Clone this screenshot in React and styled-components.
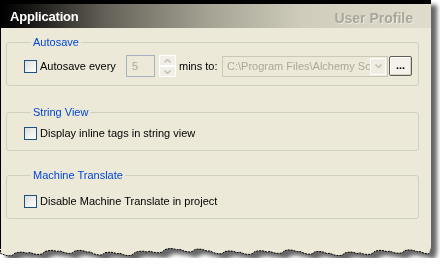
import styled, { createGlobalStyle } from 'styled-components';

const Global = createGlobalStyle`
  html, body { margin: 0; padding: 0; background: #fff; }
  body { font-family: "Liberation Sans", Arial, sans-serif; font-size: 11px; color: #000; }
`;

// Marco completo con sombra (ventana + borde rasgado)
const Frame = styled.div`
  width: 431px;
  filter: drop-shadow(6px 5px 2px rgba(0, 0, 0, 0.6));
`;

const Window = styled.div`
  box-sizing: border-box;
  height: 247px;
  background: #ece9d8;
  border-top: 4px solid #000;
  border-left: 1px solid #000;
`;

const Header = styled.div`
  height: 24px;
  display: flex;
  align-items: center;
  justify-content: space-between;
  padding: 0 18px 0 9px;
  background: linear-gradient(to right, #000 0%, #1c1b18 8%, #66645a 25%, #a4a293 48%, #cfccbb 70%, #e0ddcd 100%);
  font-weight: bold;
  font-size: 13px;
`;

const Title = styled.span`
  color: #fff;
  letter-spacing: -0.2px;
  padding-top: 1px;
`;

const Section = styled.span`
  color: #a9a79b;
  text-shadow: 1px 1px 0 rgba(255, 255, 255, 0.45);
  font-size: 14px;
  padding-top: 3px;
`;

const Body = styled.div`
  padding: 0 12px 0 5px;
`;

const Group = styled.fieldset`
  margin: ${(p) => p.$top}px 0 0 0;
  padding: 0 0 ${(p) => p.$bottom}px 17px;
  border: 1px solid #d0d0bf;
  border-radius: 3px;
  min-width: 0;
`;

const Legend = styled.legend`
  margin-left: 7px;
  padding: 0 2px;
  line-height: 13px;
  color: #0046d5;
`;

const Row = styled.div`
  display: flex;
  align-items: center;
  margin-top: ${(p) => p.$top}px;
  height: ${(p) => p.$h || 13}px;
`;

const Check = styled.span`
  box-sizing: border-box;
  width: 13px;
  height: 13px;
  flex: none;
  border: 1px solid #1c5180;
  background: linear-gradient(135deg, #dcdcd7 0%, #f2f2ef 60%, #fff 100%);
`;

const Label = styled.span`
  margin-left: 3px;
  line-height: 13px;
  white-space: nowrap;
  width: ${(p) => (p.$w ? `${p.$w}px` : 'auto')};
  flex: none;
`;

const SpinText = styled.span`
  box-sizing: border-box;
  width: 29px;
  height: 22px;
  margin-left: 9px;
  border: 1px solid #a6b2c2;
  padding-left: 5px;
  line-height: 20px;
  color: #aca899;
  flex: none;
`;

const SpinButtons = styled.span`
  display: flex;
  flex-direction: column;
  width: 17px;
  height: 22px;
  margin-left: 4px;
  flex: none;
`;

const SpinHalf = styled.span`
  box-sizing: border-box;
  flex: 1;
  display: flex;
  align-items: center;
  justify-content: center;
  border: 1px solid #fff;
  background: #f1efe6;
`;

const Combo = styled.span`
  box-sizing: border-box;
  display: flex;
  align-items: center;
  width: 166px;
  height: 21px;
  margin-left: 8px;
  border: 1px solid #cbc8b9;
  padding: 0 1px 0 4px;
  flex: none;
`;

const ComboText = styled.span`
  flex: 1;
  min-width: 0;
  overflow: hidden;
  white-space: nowrap;
  color: #aca899;
`;

const ComboArrow = styled.span`
  box-sizing: border-box;
  width: 16px;
  height: 17px;
  flex: none;
  display: flex;
  align-items: center;
  justify-content: center;
  border: 1px solid #fff;
  background: #eeece3;
`;

const BrowseButton = styled.button`
  box-sizing: border-box;
  width: 23px;
  height: 20px;
  margin-left: 1px;
  padding: 0 0 3px 0;
  flex: none;
  border: 1px solid #5e5c54;
  border-radius: 2px;
  box-shadow: inset 1px 1px 0 #fff, inset -1px -1px 0 #d6d3c5;
  background: #f3f1ea;
  font: bold 11px "Liberation Sans", Arial, sans-serif;
  line-height: 14px;
  display: flex;
  align-items: flex-end;
  justify-content: center;
`;

const Chevron = ({ up }) => (
  <svg width="7" height="4" viewBox="0 0 7 4">
    <path d={up ? 'M0.5 3.5 L3.5 0.5 L6.5 3.5' : 'M0.5 0.5 L3.5 3.5 L6.5 0.5'} fill="none" stroke="#c6c4b8" strokeWidth="1.6" />
  </svg>
);

// Borde inferior rasgado (dibujo)
const TornEdge = () => {
  const pts = [];
  for (let x = 0; x <= 431; x += 3) {
    const y = 5 + 1.6 * Math.sin(x * 0.21) + 1.2 * Math.sin(x * 0.057 + 1) - 1.8 * Math.max(0, Math.sin(x * 0.023 - 3)) + ((x * 7) % 5) * 0.35;
    pts.push(`${x},${y.toFixed(1)}`);
  }
  const edge = pts.join(' L');
  return (
    <svg width="431" height="11" viewBox="0 0 431 11" style={{ display: 'block' }}>
      <path d={`M0,0 L${edge} L431,0 Z`} fill="#ece9d8" />
      <path d={`M0.5,0 L0.5,5 M${edge}`} fill="none" stroke="#000" strokeWidth="1" strokeDasharray="2 1" />
    </svg>
  );
};

export default function App() {
  return (
    <>
      <Global />
      <Frame>
        <Window>
          <Header>
            <Title>Application</Title>
            <Section>User Profile</Section>
          </Header>
          <Body>
            <Group $top={8} $bottom={8}>
              <Legend>Autosave</Legend>
              <Row $top={6} $h={22}>
                <Check />
                <Label $w={77}>Autosave every</Label>
                <SpinText>5</SpinText>
                <SpinButtons>
                  <SpinHalf><Chevron up /></SpinHalf>
                  <SpinHalf><Chevron /></SpinHalf>
                </SpinButtons>
                <Label $w={35}>mins to:</Label>
                <Combo>
                  <ComboText>C:\Program Files\Alchemy Sof</ComboText>
                  <ComboArrow><Chevron /></ComboArrow>
                </Combo>
                <BrowseButton>...</BrowseButton>
              </Row>
            </Group>
            <Group $top={20} $bottom={10}>
              <Legend>String View</Legend>
              <Row $top={8}>
                <Check />
                <Label>Display inline tags in string view</Label>
              </Row>
            </Group>
            <Group $top={18} $bottom={10}>
              <Legend>Machine Translate</Legend>
              <Row $top={13}>
                <Check />
                <Label>Disable Machine Translate in project</Label>
              </Row>
            </Group>
          </Body>
        </Window>
        <TornEdge />
      </Frame>
    </>
  );
}
